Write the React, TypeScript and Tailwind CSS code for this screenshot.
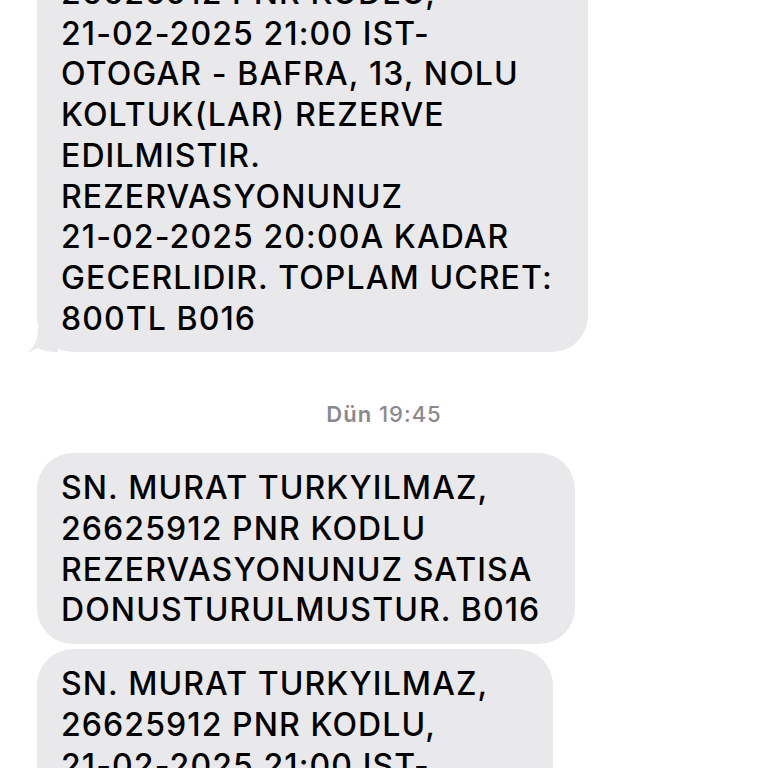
import React from "react";

const Bubble = ({ lines, width, tail = false, className = "" }: { lines: string[]; width: string; tail?: boolean; className?: string }) => (
  <div className={`relative ${width} ${className}`}>
    <div className="rounded-[36px] bg-[#e9e9eb] pl-6 pr-6 pt-[15px] pb-[13px]">
      {lines.map((l, i) => (
        <div key={i} className="whitespace-nowrap">
          {l}
        </div>
      ))}
    </div>
    {tail && (
      <svg className="absolute -left-[9px] bottom-0" width="30" height="24" viewBox="0 0 30 24">
        <path d="M30 0 L30 24 C22 24 15 23 10 20 C5 22 2 24 0 24 C6 20 10 12 10 0 Z" fill="#e9e9eb" />
      </svg>
    )}
  </div>
);

export default function App() {
  return (
    <div className="h-[768px] w-[768px] overflow-hidden bg-white font-['Inter','Liberation_Sans',sans-serif] text-[32px] font-medium tracking-[1.1px] leading-[40.7px] text-black">
      <div className="-mt-[42px] flex flex-col pl-[37px]">
        <Bubble
          width="w-[551px]"
          tail
          lines={[
            "26625912 PNR KODLU,",
            "21-02-2025 21:00 IST-",
            "OTOGAR - BAFRA, 13, NOLU",
            "KOLTUK(LAR) REZERVE",
            "EDILMISTIR.",
            "REZERVASYONUNUZ",
            "21-02-2025 20:00A KADAR",
            "GECERLIDIR. TOPLAM UCRET:",
            "800TL B016",
          ]}
        />
        <div className="mt-[48px] mb-[25px] -ml-[37px] text-center text-[22px] font-medium leading-[28px] tracking-[1px] text-[#8a8a8e]">
          <span className="font-semibold">Dün</span> 19:45
        </div>
        <Bubble
          width="w-[538px]"
          lines={["SN. MURAT TURKYILMAZ,", "26625912 PNR KODLU", "REZERVASYONUNUZ SATISA", "DONUSTURULMUSTUR. B016"]}
        />
        <Bubble
          width="w-[516px]"
          className="mt-[5px]"
          lines={["SN. MURAT TURKYILMAZ,", "26625912 PNR KODLU,", "21-02-2025 21:00 IST-", "OTOGAR - BAFRA, 13, NOLU"]}
        />
      </div>
    </div>
  );
}
